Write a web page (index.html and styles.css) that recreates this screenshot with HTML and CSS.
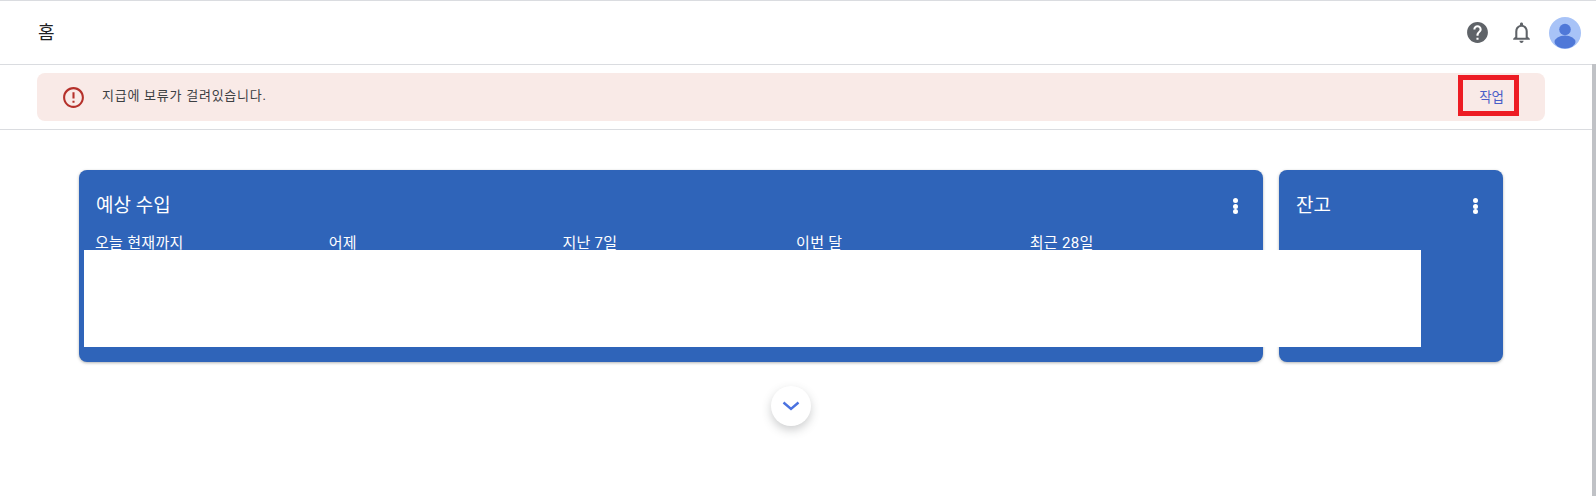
FILE: index.html
```html
<!DOCTYPE html>
<html lang="ko">
<head>
    <meta charset="UTF-8">
    <title>홈</title>
    <link rel="stylesheet" href="styles.css">
</head>
<body>
    <header class="topbar">
        <h1 class="page-title">홈</h1>
        <div class="topbar-icons">
            <svg class="icon-help" width="25" height="25" viewBox="0 0 24 24"><path fill="#5f6368" d="M12 2C6.48 2 2 6.48 2 12s4.48 10 10 10 10-4.48 10-10S17.52 2 12 2zm1 17h-2v-2h2v2zm2.07-7.75l-.9.92C13.45 12.9 13 13.5 13 15h-2v-.5c0-1.1.45-2.1 1.17-2.83l1.24-1.26c.37-.36.59-.86.59-1.41 0-1.1-.9-2-2-2s-2 .9-2 2H8c0-2.21 1.79-4 4-4s4 1.79 4 4c0 .88-.36 1.68-.93 2.25z"/></svg>
            <svg class="icon-bell" width="25" height="25" viewBox="0 0 24 24"><path fill="#5f6368" d="M12 22c1.1 0 2-.9 2-2h-4c0 1.1.9 2 2 2zm6-6v-5c0-3.07-1.63-5.64-4.5-6.32V4c0-.83-.67-1.5-1.5-1.5s-1.5.67-1.5 1.5v.68C7.64 5.36 6 7.92 6 11v5l-2 2v1h16v-1l-2-2zm-2 1H8v-6c0-2.48 1.51-4.5 4-4.5s4 2.02 4 4.5v6z"/></svg>
            <svg class="avatar" width="32" height="32" viewBox="0 0 32 32"><circle cx="16" cy="16" r="16" fill="#a8c3f7"/><circle cx="16" cy="12.5" r="5.8" fill="#4f78d8"/><ellipse cx="16" cy="25" rx="10.5" ry="6.5" fill="#4f78d8"/></svg>
        </div>
    </header>

    <section class="notice-row">
        <div class="notice">
            <svg class="icon-alert" width="25" height="25" viewBox="0 0 24 24"><path fill="#b5302a" d="M12 2C6.48 2 2 6.48 2 12s4.48 10 10 10 10-4.48 10-10S17.52 2 12 2zm0 18c-4.42 0-8-3.58-8-8s3.58-8 8-8 8 3.58 8 8-3.58 8-8 8zm-1-5h2v2h-2zm0-8h2v6h-2z"/></svg>
            <span class="notice-text">지급에 보류가 걸려있습니다.</span>
            <a class="notice-action">작업</a>
        </div>
    </section>

    <main class="cards">
        <div class="card card-wide">
            <div class="card-head">
                <h2>예상 수입</h2>
                <span class="dots"><i></i><i></i><i></i></span>
            </div>
            <div class="periods">
                <span>오늘 현재까지</span>
                <span>어제</span>
                <span>지난 7일</span>
                <span>이번 달</span>
                <span>최근 28일</span>
            </div>
        </div>
        <div class="card card-side">
            <div class="card-head">
                <h2>잔고</h2>
                <span class="dots"><i></i><i></i><i></i></span>
            </div>
        </div>
        <div class="redaction"></div>
    </main>

    <div class="more-row">
        <button class="more-btn" type="button">
            <svg width="18" height="10" viewBox="0 0 18 10"><path d="M1.5 1.5L9 8l7.5-6.5" fill="none" stroke="#4a72e0" stroke-width="2.4"/></svg>
        </button>
    </div>

    <div class="scroll-thumb"></div>
</body>
</html>
```

FILE: styles.css
```css
html, body {
    height: 496px;
    overflow: hidden;
}
body {
    margin: 0;
    background-color: #fff;
    color: #202124;
    font-family: 'Roboto', 'Noto Sans CJK KR', sans-serif;
}
.topbar {
    display: flex;
    align-items: center;
    justify-content: space-between;
    height: 63px;
    padding: 0 15px 0 38px;
    border-top: 1px solid #dadce0;
    border-bottom: 1px solid #dadce0;
}
.page-title {
    margin: 0 0 3px 0;
    font-size: 18px;
    font-weight: 400;
}
.topbar-icons {
    display: flex;
    align-items: center;
}
.topbar-icons svg {
    display: block;
}
.icon-bell {
    margin-left: 19px;
}
.avatar {
    margin-left: 15px;
}
.notice-row {
    height: 65px;
    padding: 8px 51px 0 37px;
    box-sizing: border-box;
    border-bottom: 1px solid #dadce0;
}
.notice {
    display: flex;
    align-items: center;
    height: 48px;
    padding: 0 41px 0 24px;
    border-radius: 8px;
    background-color: #f9eae7;
}
.notice-text {
    margin: 0 0 6px 16px;
    flex: 1;
    font-size: 13px;
    color: #3c4043;
    letter-spacing: 0.75px;
}
.notice-action {
    position: relative;
    font-size: 13.5px;
    line-height: 16px;
    color: #4a5fc8;
}
.notice-action::after {
    content: "";
    position: absolute;
    left: -21px;
    top: -14px;
    width: 51px;
    height: 31px;
    border: 5px solid #ed1c24;
}
.cards {
    position: relative;
    display: flex;
    gap: 16px;
    padding: 40px 93px 0 79px;
}
.card {
    height: 192px;
    box-sizing: border-box;
    border-radius: 8px;
    background-color: #2f64b9;
    color: #fff;
    box-shadow: 0 1px 3px rgba(60, 64, 67, 0.4);
}
.card-wide {
    width: 1184px;
}
.card-side {
    width: 224px;
}
.card-head {
    display: flex;
    align-items: center;
    justify-content: space-between;
    height: 32px;
    padding: 17px 16px 0 17px;
}
.card-head h2 {
    margin: 0;
    font-size: 19px;
    font-weight: 400;
}
.dots {
    display: flex;
    flex-direction: column;
    gap: 0.5px;
    margin-right: 9px;
    margin-top: 6px;
}
.dots i {
    display: block;
    width: 5px;
    height: 5px;
    border-radius: 50%;
    background-color: #fff;
}
.periods {
    display: grid;
    grid-template-columns: repeat(5, 233.7px);
    height: 16px;
    padding: 14px 0 0 16px;
    font-size: 15px;
    line-height: 20px;
    letter-spacing: 0.3px;
}
.redaction {
    position: absolute;
    left: 84px;
    top: 120px;
    width: 1337px;
    height: 97px;
    background-color: #fff;
}
.more-row {
    display: flex;
    justify-content: center;
    padding: 24px 14px 0 0;
}
.more-btn {
    display: flex;
    align-items: center;
    justify-content: center;
    width: 40px;
    height: 40px;
    padding: 0;
    border: none;
    border-radius: 50%;
    background-color: #fff;
    box-shadow: 0 4px 10px rgba(60, 64, 67, 0.25);
}
.scroll-thumb {
    position: absolute;
    right: 0;
    top: 64px;
    width: 4px;
    height: 432px;
    background-color: #c0c2c6;
}
```
